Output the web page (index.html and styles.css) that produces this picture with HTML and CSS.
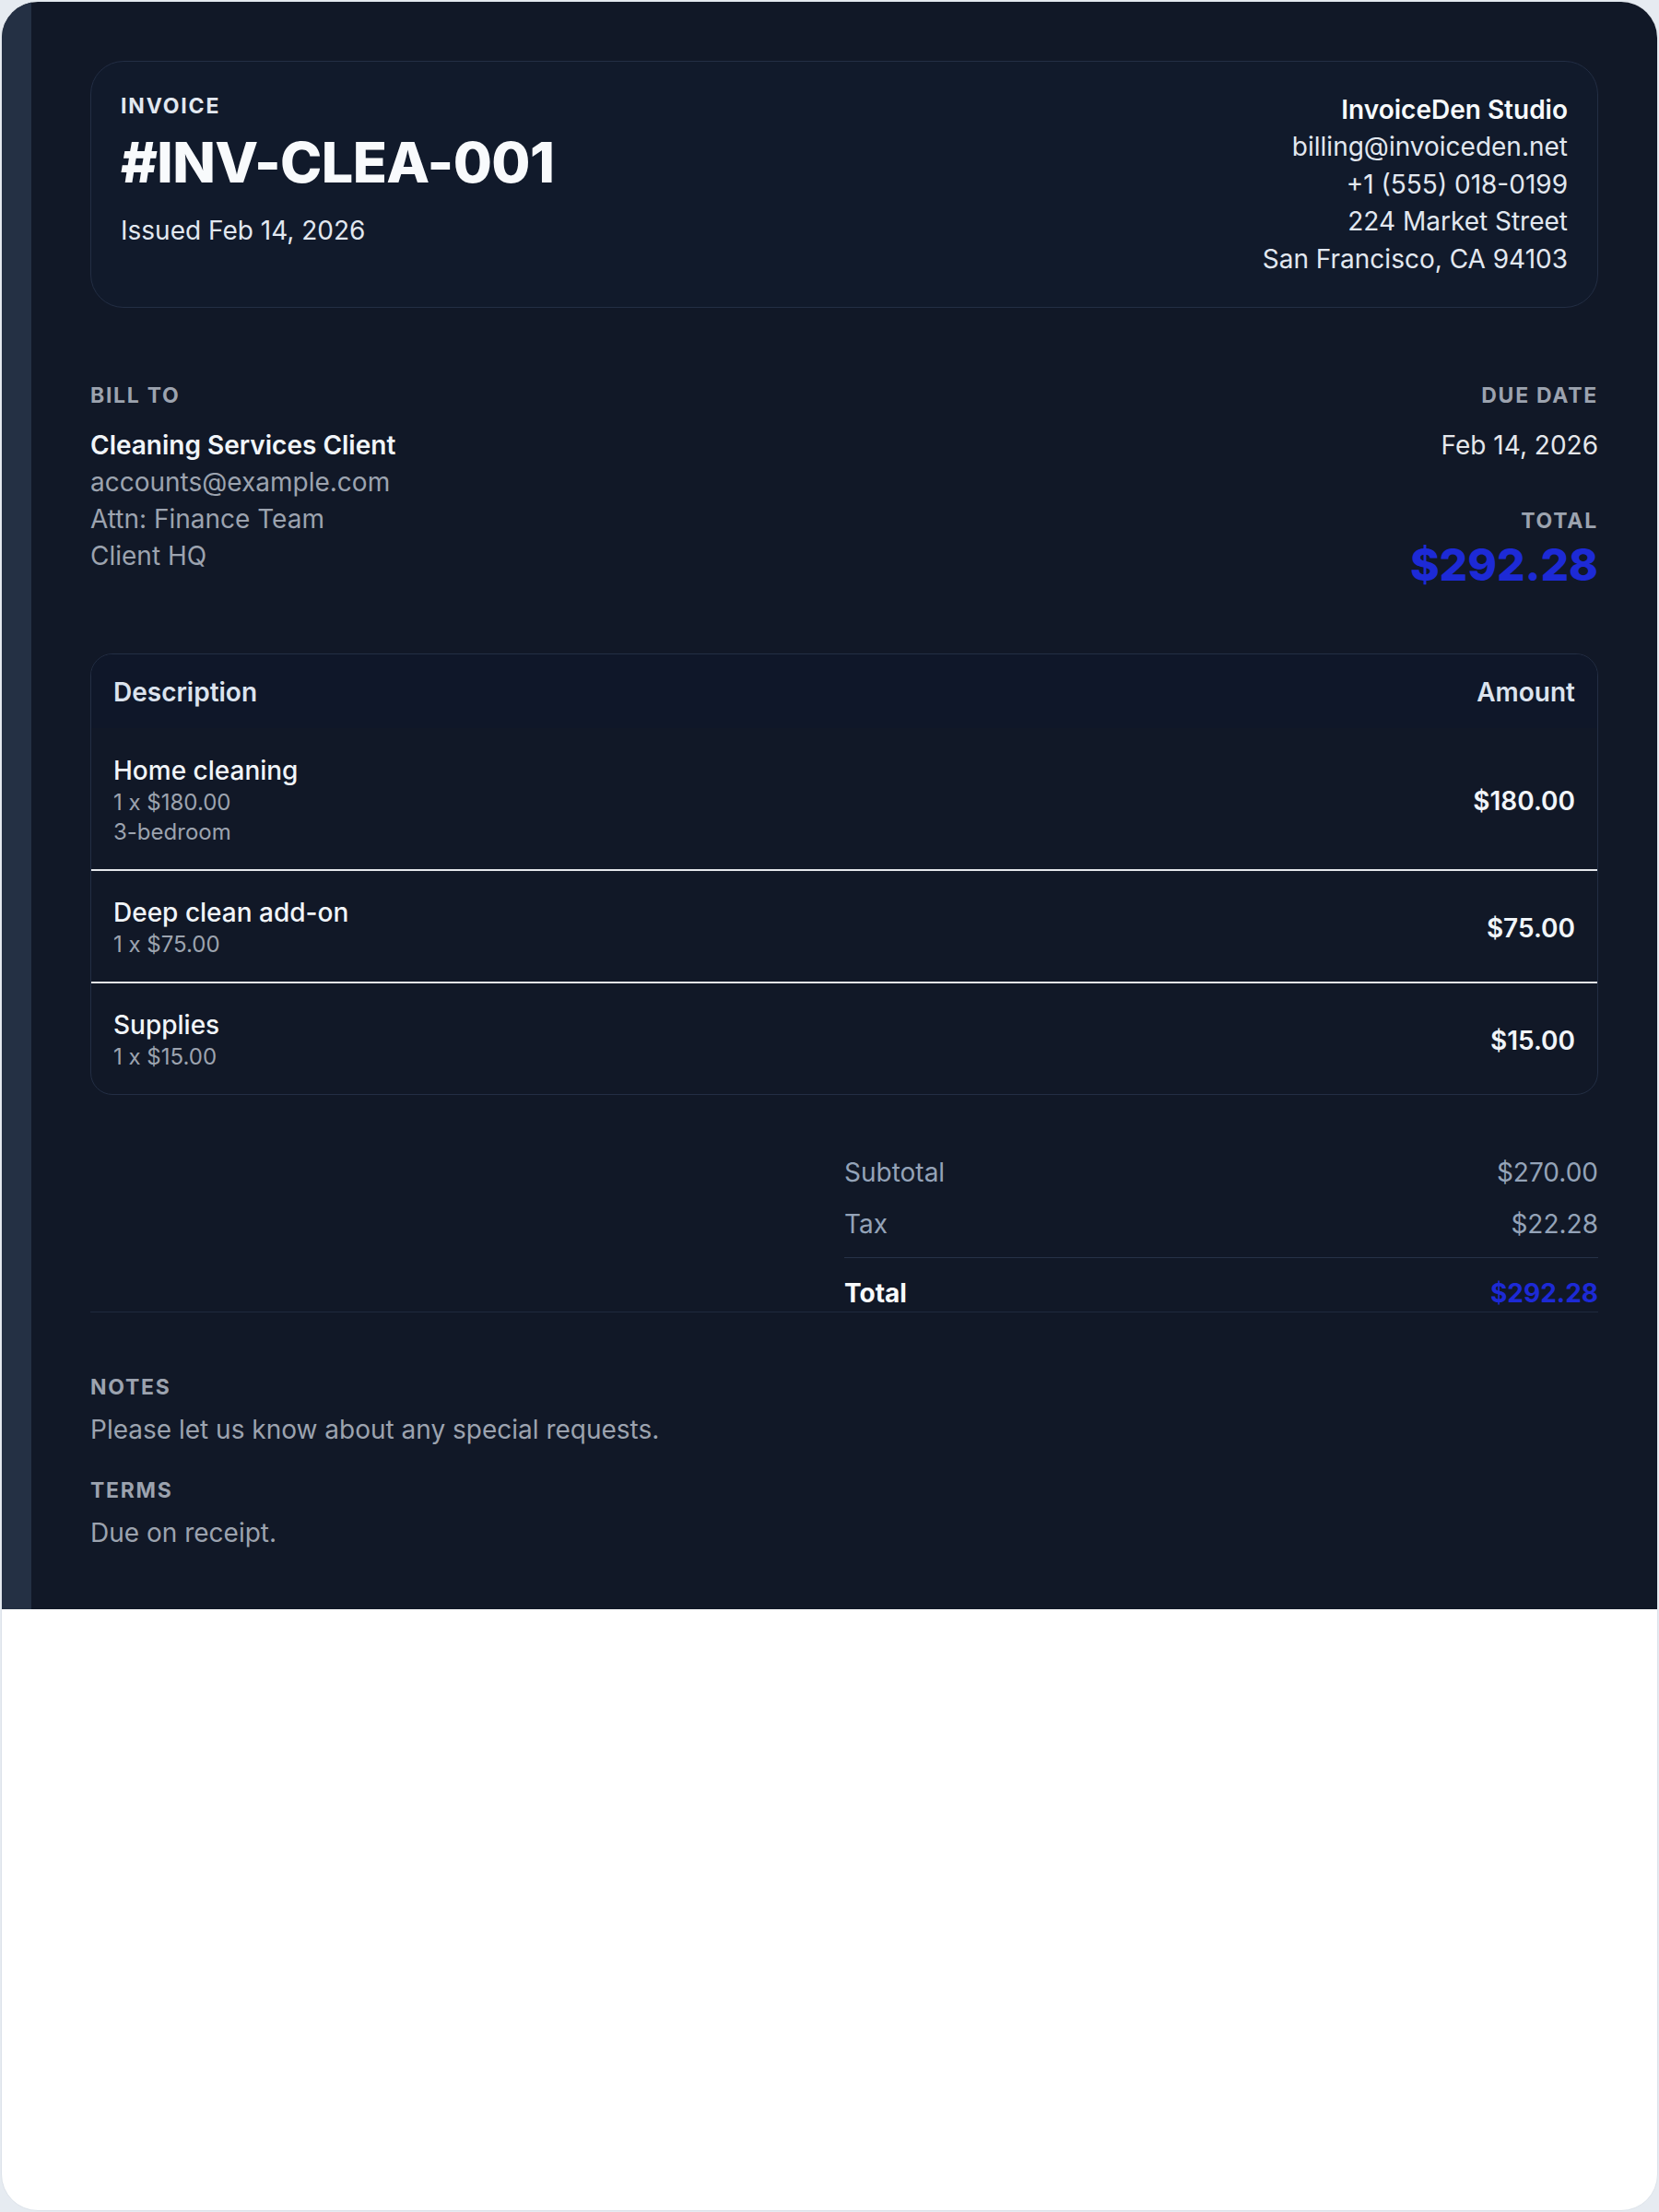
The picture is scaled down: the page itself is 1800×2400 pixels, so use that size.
FILE: index.html
```html
<!DOCTYPE html>
<html lang="en">
<head>
<meta charset="utf-8">
<title>Invoice #INV-CLEA-001</title>
<link rel="stylesheet" href="styles.css">
</head>
<body>
<div class="page">
  <div class="card">
    <main class="invoice">
      <header class="head">
        <div class="head-left">
          <div class="eyebrow">Invoice</div>
          <h1 class="number">#INV-CLEA-001</h1>
          <div class="issued">Issued Feb 14, 2026</div>
        </div>
        <div class="vendor">
          <div class="vendor-name">InvoiceDen Studio</div>
          <div>billing@invoiceden.net</div>
          <div>+1 (555) 018-0199</div>
          <div>224 Market Street</div>
          <div>San Francisco, CA 94103</div>
        </div>
      </header>

      <section class="parties">
        <div class="bill">
          <div class="label bill-label">Bill To</div>
          <div class="client-name">Cleaning Services Client</div>
          <div class="muted">accounts@example.com</div>
          <div class="muted">Attn: Finance Team</div>
          <div class="muted">Client HQ</div>
        </div>
        <div class="due">
          <div class="label">Due Date</div>
          <div class="due-date">Feb 14, 2026</div>
          <div class="label total-label">Total</div>
          <div class="total-amount">$292.28</div>
        </div>
      </section>

      <section class="items">
        <div class="items-head">
          <span>Description</span>
          <span>Amount</span>
        </div>
        <div class="item">
          <div class="item-desc">
            <div class="item-title">Home cleaning</div>
            <div class="item-sub">1 x $180.00</div>
            <div class="item-sub">3-bedroom</div>
          </div>
          <div class="item-amount">$180.00</div>
        </div>
        <div class="item">
          <div class="item-desc">
            <div class="item-title">Deep clean add-on</div>
            <div class="item-sub">1 x $75.00</div>
          </div>
          <div class="item-amount">$75.00</div>
        </div>
        <div class="item">
          <div class="item-desc">
            <div class="item-title">Supplies</div>
            <div class="item-sub">1 x $15.00</div>
          </div>
          <div class="item-amount">$15.00</div>
        </div>
      </section>

      <section class="totals-wrap">
        <div class="totals">
          <div class="t-row"><span>Subtotal</span><span>$270.00</span></div>
          <div class="t-row"><span>Tax</span><span>$22.28</span></div>
          <div class="t-row t-total"><span>Total</span><span class="t-total-value">$292.28</span></div>
        </div>
      </section>

      <section class="notes">
        <div class="label notes-label">Notes</div>
        <div class="muted">Please let us know about any special requests.</div>
        <div class="label notes-label terms-label">Terms</div>
        <div class="muted">Due on receipt.</div>
      </section>
    </main>
  </div>
</div>
</body>
</html>
```

FILE: styles.css
```css
* {
  box-sizing: border-box;
}

html,
body {
  margin: 0;
  padding: 0;
}

body {
  background: #e6ebf1;
  font-family: Inter, "Noto Sans", "Liberation Sans", sans-serif;
  font-size: 28px;
  line-height: 40px;
  color: #e2e8f0;
}

.page {
  padding: 1px;
}

.card {
  min-height: calc(100vh - 2px);
  background: #ffffff;
  border: 1px solid #dde3ea;
  border-radius: 40px;
  overflow: hidden;
}

.invoice {
  background: #111827;
  border-left: 32px solid #243044;
  padding: 64px 64px 63px;
}

/* Header box */
.head {
  display: flex;
  justify-content: space-between;
  align-items: flex-start;
  padding: 32px;
  border: 1px solid #232e44;
  border-radius: 36px;
  background: #111a2b;
}

.eyebrow {
  font-size: 23px;
  line-height: 32px;
  font-weight: 700;
  letter-spacing: 0.08em;
  text-transform: uppercase;
  color: #e2e8f0;
}

.number {
  margin: 12px 0 0;
  font-size: 61px;
  line-height: 66px;
  font-weight: 800;
  letter-spacing: -0.01em;
  color: #f8fafc;
}

.issued {
  margin-top: 21px;
  color: #e2e8f0;
}

.vendor {
  text-align: right;
  line-height: 40.4px;
  color: #e2e8f0;
}

.vendor-name {
  font-weight: 600;
  color: #f8fafc;
}

/* Bill to / due */
.parties {
  display: flex;
  justify-content: space-between;
  align-items: flex-start;
  margin-top: 79px;
}

.label {
  font-size: 23px;
  line-height: 32px;
  font-weight: 700;
  letter-spacing: 0.075em;
  text-transform: uppercase;
  color: #9ca3af;
}

.bill-label {
  margin-bottom: 18px;
}

.client-name {
  font-weight: 600;
  color: #f1f5f9;
}

.muted {
  color: #9ca3af;
}

.due {
  text-align: right;
}

.due-date {
  margin-top: 18px;
  color: #e5e7eb;
}

.total-label {
  margin-top: 46px;
}

.total-amount {
  margin-top: 2px;
  font-size: 48px;
  line-height: 60px;
  font-weight: 800;
  color: #1d2ad6;
}

/* Items table */
.items {
  margin-top: 66px;
  border: 1px solid #232e44;
  border-radius: 24px;
  overflow: hidden;
}

.items-head {
  display: flex;
  justify-content: space-between;
  padding: 21px 24px 19px;
  background: #0f1729;
  font-weight: 600;
  color: #dbe3ee;
}

.item {
  display: flex;
  justify-content: space-between;
  align-items: center;
  padding: 28px 24px 24px;
}

.item + .item {
  padding-top: 27px;
  border-top: 2px solid #e5e7eb;
}

.item-title {
  font-weight: 500;
  line-height: 37px;
  color: #f1f5f9;
}

.item-sub {
  font-size: 24px;
  line-height: 32px;
  color: #9ca3af;
}

.item-amount {
  font-weight: 600;
  color: #f1f5f9;
}

/* Totals */
.totals-wrap {
  display: flex;
  justify-content: flex-end;
  margin-top: 64px;
  border-bottom: 1px solid #1f2a3d;
}

.totals {
  width: 50%;
}

.t-row {
  display: flex;
  justify-content: space-between;
  color: #94a3b8;
}

.t-row + .t-row {
  margin-top: 16px;
}

.t-total {
  padding-top: 18px;
  border-top: 1px solid #263247;
  font-weight: 700;
  color: #f8fafc;
}

.t-total-value {
  color: #1d2ad6;
}

/* Notes */
.notes {
  margin-top: 65px;
}

.notes-label {
  margin-bottom: 10px;
}

.terms-label {
  margin-top: 30px;
}
```
